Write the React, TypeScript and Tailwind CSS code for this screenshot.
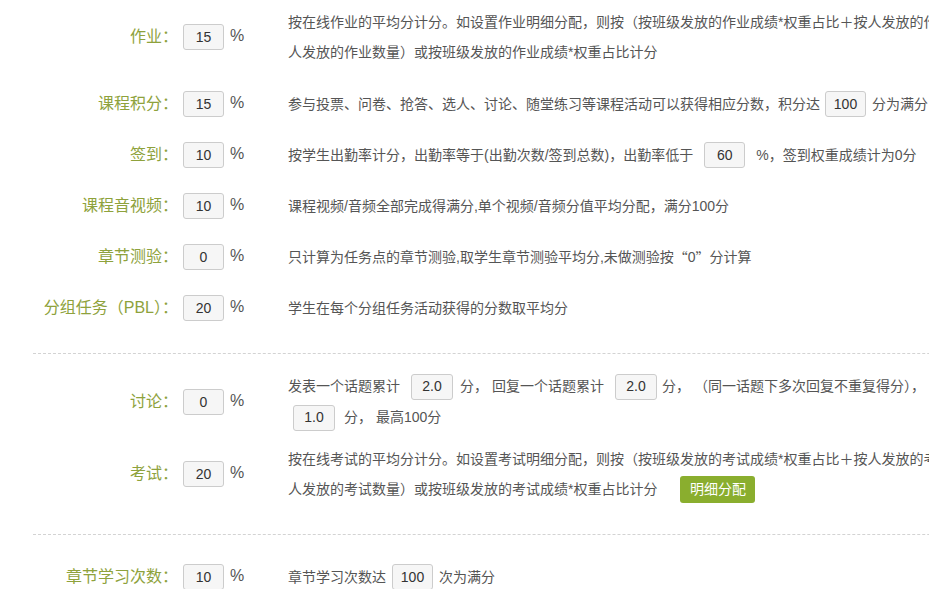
import React from "react";

const FONT = "font-['Liberation_Sans','Noto_Sans_CJK_SC',sans-serif]";

function Box({ v, cls = "" }: { v: string; cls?: string }) {
  return (
    <div
      className={`w-[41px] h-[26px] shrink-0 border border-[#cccccc] bg-[#f6f6f6] rounded-[3px] flex items-center justify-center text-[14px] text-[#333] ${cls}`}
    >
      {v}
    </div>
  );
}

function Row({
  label,
  value,
  children,
  cls = "",
}: {
  label: string;
  value: string;
  children: React.ReactNode;
  cls?: string;
}) {
  return (
    <div className={`flex items-center ${cls}`}>
      <div className="w-[178px] shrink-0 text-right text-[16px] text-[#8ea23c] leading-[30px] whitespace-nowrap">
        {label}：
      </div>
      <Box v={value} cls="ml-[5px]" />
      <div className="w-[64px] shrink-0 pl-[6px] text-[16px] text-[#555] leading-[20px] mb-[3px]">%</div>
      <div className="text-[14px] text-[#555] whitespace-nowrap">{children}</div>
    </div>
  );
}

function Line({ children, h = "h-[30px]" }: { children: React.ReactNode; h?: string }) {
  return <div className={`${h} flex items-center whitespace-nowrap`}>{children}</div>;
}

function Dash({ cls = "" }: { cls?: string }) {
  return <div className={`ml-[33px] border-t border-dashed border-[#d3d3d3] ${cls}`} />;
}

export default function App() {
  return (
    <div className={`w-[929px] h-[589px] overflow-hidden bg-white ${FONT}`}>
      <div className="pt-[7px] w-[1200px]">
        <Row label="作业" value="15" cls="mb-[22px]">
          <Line>按在线作业的平均分计分。如设置作业明细分配，则按（按班级发放的作业成绩*权重占比＋按人发放的作业成绩总和/按</Line>
          <Line>人发放的作业数量）或按班级发放的作业成绩*权重占比计分</Line>
        </Row>
        <Row label="课程积分" value="15" cls="mb-[21px]">
          <Line>
            <span>参与投票、问卷、抢答、选人、讨论、随堂练习等课程活动可以获得相应分数，积分达</span>
            <Box v="100" cls="ml-[5px] mr-[6px]" />
            <span>分为满分</span>
          </Line>
        </Row>
        <Row label="签到" value="10" cls="mb-[21px]">
          <Line>
            <span>按学生出勤率计分，出勤率等于(出勤次数/签到总数)，出勤率低于</span>
            <Box v="60" cls="ml-[11px] mr-[11px]" />
            <span>%，签到权重成绩计为0分</span>
          </Line>
        </Row>
        <Row label="课程音视频" value="10" cls="mb-[21px]">
          <Line>课程视频/音频全部完成得满分,单个视频/音频分值平均分配，满分100分</Line>
        </Row>
        <Row label="章节测验" value="0" cls="mb-[21px]">
          <Line>
            <span>只计算为任务点的章节测验,取学生章节测验平均分,未做测验按</span>
            <span className="font-['Noto_Sans_CJK_SC',sans-serif]">“</span>
            <span>0</span>
            <span className="font-['Noto_Sans_CJK_SC',sans-serif]">”</span>
            <span>分计算</span>
          </Line>
        </Row>
        <Row label="分组任务（PBL）" value="20">
          <Line>学生在每个分组任务活动获得的分数取平均分</Line>
        </Row>

        <Dash cls="mt-[30px]" />

        <Row label="讨论" value="0" cls="mt-[17px]">
          <Line h="h-[31px]">
            <span>发表一个话题累计</span>
            <Box v="2.0" cls="ml-[11px] mr-[7px] w-[42px]" />
            <span>分，</span>
            <span className="ml-[4px]">回复一个话题累计</span>
            <Box v="2.0" cls="ml-[11px] mr-[5px] w-[42px]" />
            <span>分，</span>
            <span className="ml-[4px]">（同一话题下多次回复不重复得分），</span>
          </Line>
          <Line h="h-[31px]">
            <Box v="1.0" cls="ml-[5px] mr-[9px] w-[42px]" />
            <span>分，</span>
            <span className="ml-[4px]">最高100分</span>
          </Line>
        </Row>

        <Row label="考试" value="20" cls="mt-[11px]">
          <Line>按在线考试的平均分计分。如设置考试明细分配，则按（按班级发放的考试成绩*权重占比＋按人发放的考试成绩总和/按</Line>
          <Line>
            <span>人发放的考试数量）或按班级发放的考试成绩*权重占比计分</span>
            <div className="ml-[23px] w-[75px] h-[27px] rounded-[3px] bg-[#8aae2e] text-white text-[14px] flex items-center justify-center">
              明细分配
            </div>
          </Line>
        </Row>

        <Dash cls="mt-[30px]" />

        <Row label="章节学习次数" value="10" cls="mt-[27px]">
          <Line>
            <span>章节学习次数达</span>
            <Box v="100" cls="ml-[6px] mr-[6px]" />
            <span>次为满分</span>
          </Line>
        </Row>
      </div>
    </div>
  );
}
